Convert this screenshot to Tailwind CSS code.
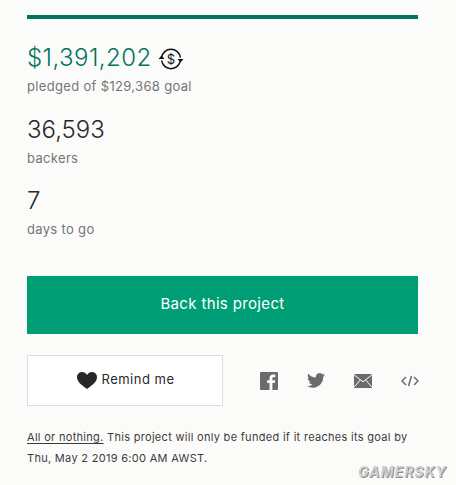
<!DOCTYPE html>
<html lang="en">
<head>
  <meta charset="UTF-8">
  <title>Back this project</title>
  <script src="https://cdn.jsdelivr.net/npm/@tailwindcss/browser@4"></script>
</head>
<body class="bg-[#fbfbfa] text-[#282828] h-[485px] overflow-hidden relative font-['Inter',sans-serif]">

  <div class="w-[391px] ml-[27px] pt-[15px]">
    <!-- progress bar -->
    <div class="h-1 bg-[#037362]"></div>

    <!-- pledged -->
    <div class="mt-[21px] flex items-center h-[36px]">
      <span class="text-[24px] font-light tracking-[0.45px] text-[#037362]">$1,391,202</span>
      <svg class="ml-[6px] mt-[1px]" width="26" height="24" viewBox="0 0 26 24" fill="none" stroke="#111" stroke-width="1.5">
        <path d="M3.600 10.500A9.500 9.500 0 0 1 22.400 10.500"/>
        <path d="M22.400 13.500A9.500 9.500 0 0 1 3.600 13.500"/>
        <path d="M0.500 12h6l-3-3.500z" fill="#111" stroke="none"/>
        <path d="M19.500 12h6l-3 3.500z" fill="#111" stroke="none"/>
        <text x="13" y="16.500" text-anchor="middle" font-size="13" fill="#111" stroke="none" font-family="Inter">$</text>
      </svg>
    </div>
    <p class="text-[13px] tracking-[0.33px] leading-5 text-[#757575]">pledged of $129,368 goal</p>

    <!-- backers -->
    <p class="mt-[18px] text-[24px] font-light leading-8">36,593</p>
    <p class="mt-[2px] text-[13px] tracking-[0.33px] leading-5 text-[#757575]">backers</p>

    <!-- days -->
    <p class="mt-[17px] text-[24px] font-light leading-8">7</p>
    <p class="mt-[2px] text-[13px] tracking-[0.33px] leading-5 text-[#757575]">days to go</p>

    <button class="mt-[37px] w-full h-[58px] pb-[2px] bg-[#009e74] text-white text-[15px] tracking-[0.35px]">Back this project</button>

    <!-- remind + share -->
    <div class="mt-[21px] flex items-center">
      <button class="flex-none w-[196px] h-[51px] pl-[2px] pb-[1px] bg-white border border-[#dcdedd] flex items-center justify-center gap-[4px] text-[13px] tracking-[0.5px]">
        <svg width="20" height="17" viewBox="0 0 20 17" fill="#282828"><path d="M10 17C7 14.500 0 10.500 0 5.200 0 2.200 2.300 0 5 0c2 0 3.900 1 5 3 1.100-2 3-3 5-3 2.700 0 5 2.200 5 5.200C20 10.500 13 14.500 10 17z"/></svg>
        Remind me
      </button>
      <div class="flex-none flex items-center ml-[37px]">
        <svg width="18" height="18" viewBox="0 0 18 18"><path fill="#6b6b6b" d="M1 0h16a1 1 0 0 1 1 1v16a1 1 0 0 1-1 1h-4.600v-7h2.400l.4-2.800h-2.800V6.500c0-.8.300-1.300 1.400-1.300h1.500V2.700c-.3 0-1.200-.1-2.200-.1-2.200 0-3.600 1.300-3.600 3.700v1.900H7.100V11h2.400v7H1a1 1 0 0 1-1-1V1a1 1 0 0 1 1-1z"/></svg>
        <svg class="ml-[29px]" width="18" height="15" viewBox="0 0 18 15"><path fill="#6b6b6b" d="M18 1.800c-.7.300-1.400.5-2.100.6.800-.5 1.300-1.200 1.600-2-.7.400-1.500.7-2.300.9A3.700 3.700 0 0 0 8.900 4.600C5.800 4.400 3.100 3 1.300.7.300 2.400.8 4.500 2.400 5.600c-.6 0-1.200-.2-1.700-.5 0 1.800 1.300 3.300 3 3.700-.5.100-1.100.2-1.700.1.500 1.500 1.900 2.500 3.500 2.500A7.400 7.400 0 0 1 0 13a10.500 10.500 0 0 0 16.200-9.300c.7-.5 1.300-1.200 1.800-1.900z"/></svg>
        <svg class="ml-[29px]" width="18" height="14" viewBox="0 0 18 14"><path fill="#6b6b6b" d="M0 0h18v14H0z"/><path fill="none" stroke="#fbfbfa" stroke-width="1" d="M0 .8l9 7 9-7M0 13.300l6.300-7.400M18 13.300l-6.300-7.400"/></svg>
        <svg class="ml-[29px]" width="18" height="12" viewBox="0 0 18 12" fill="none" stroke="#6b6b6b" stroke-width="1.500"><path d="M5 2L1 6l4 4M13 2l4 4-4 4M10.500 1L7.500 11"/></svg>
      </div>
    </div>

    <p class="mt-[21px] text-[11px] tracking-[0.3px] leading-[21px] text-[#3c3c3c] whitespace-nowrap"><span class="underline underline-offset-2">All or nothing.</span> This project will only be funded if it reaches its goal by<br>Thu, May 2 2019 6:00 AM AWST.</p>
  </div>

  <!-- watermark -->
  <span class="absolute left-[358px] top-[464px] text-[14px] leading-4 font-bold italic tracking-[1px] text-[#d0d0d0] [text-shadow:1px_1px_0_#8a8a8a]">GAMERSKY</span>

</body>
</html>
